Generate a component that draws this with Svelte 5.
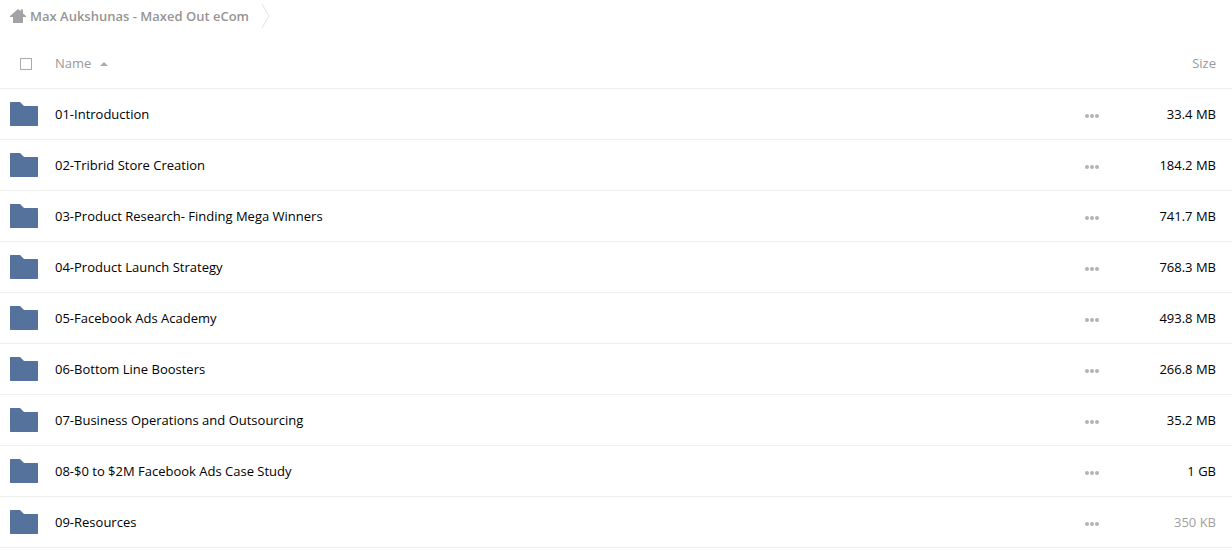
<script lang="ts">
    const columns = { name: 'Name', size: 'Size' };

    let folders = $state([
        { name: '01-Introduction', size: '33.4 MB', small: false, selected: false },
        { name: '02-Tribrid Store Creation', size: '184.2 MB', small: false, selected: false },
        { name: '03-Product Research- Finding Mega Winners', size: '741.7 MB', small: false, selected: false },
        { name: '04-Product Launch Strategy', size: '768.3 MB', small: false, selected: false },
        { name: '05-Facebook Ads Academy', size: '493.8 MB', small: false, selected: false },
        { name: '06-Bottom Line Boosters', size: '266.8 MB', small: false, selected: false },
        { name: '07-Business Operations and Outsourcing', size: '35.2 MB', small: false, selected: false },
        { name: '08-$0 to $2M Facebook Ads Case Study', size: '1 GB', small: false, selected: false },
        { name: '09-Resources', size: '350 KB', small: true, selected: false },
    ]);

    let allSelected = $state(false);
    let ascending = $state(true);

    function toggleAll() {
        folders.forEach((f) => (f.selected = allSelected));
    }

    function toggleSort() {
        ascending = !ascending;
        folders.reverse();
    }
</script>

<nav class="breadcrumb">
    <a href="#home">
        <svg width="16" height="14" viewBox="0 0 16 14" aria-hidden="true">
            <path d="M8 0L0 7v1h3v6h10V8h3V7l-3-2.6V.6h-2.4v1.7z" fill="#a3a3a3" />
        </svg>
        <span>Max Aukshunas - Maxed Out eCom</span>
    </a>
    <svg class="divider" width="9" height="26" viewBox="0 0 9 26" aria-hidden="true">
        <path d="M1 1l7 12-7 12" fill="none" stroke="#e2e2e2" />
    </svg>
</nav>

<table>
    <thead>
        <tr>
            <th class="icon-cell">
                <input type="checkbox" aria-label="Select all" bind:checked={allSelected} onchange={toggleAll} />
            </th>
            <th class="name">
                <button class="sort" onclick={toggleSort}>
                    {columns.name}
                    <svg class:descending={!ascending} width="8" height="4" viewBox="0 0 8 4" aria-hidden="true">
                        <path d="M0 4l4-4 4 4z" fill="#aaa" />
                    </svg>
                </button>
            </th>
            <th class="actions"></th>
            <th class="size">{columns.size}</th>
        </tr>
    </thead>
    <tbody>
        {#each folders as folder (folder.name)}
            <tr class:selected={folder.selected}>
                <td class="icon-cell">
                    <svg width="28" height="24" viewBox="0 0 28 24" aria-hidden="true">
                        <path d="M.5 0H10l4 4h13.5l.5.5v19l-.5.5H.5l-.5-.5V.5z" fill="#54729b" />
                    </svg>
                </td>
                <td class="name"><a href="#{folder.name}">{folder.name}</a></td>
                <td class="actions">
                    <button class="more" aria-label="Actions for {folder.name}">
                        <svg width="14" height="4" viewBox="0 0 14 4" aria-hidden="true">
                            <circle cx="2" cy="2" r="2" />
                            <circle cx="7" cy="2" r="2" />
                            <circle cx="12" cy="2" r="2" />
                        </svg>
                    </button>
                </td>
                <td class="size" class:small={folder.small}>{folder.size}</td>
            </tr>
        {/each}
    </tbody>
</table>

<style>
    :global(body) {
        background: #fff;
        color: #000;
        font-family: 'Open Sans', sans-serif;
        font-size: 13px;
        line-height: 20px;
    }
    svg {
        display: block;
    }
    a {
        color: inherit;
        text-decoration: none;
    }
    button {
        background: none;
        border: none;
        padding: 0;
        font: inherit;
        color: inherit;
        cursor: pointer;
    }
    .breadcrumb {
        display: flex;
        align-items: center;
        gap: 12px;
        height: 32px;
        padding: 0 10px;
        margin-bottom: 6px;
        color: #959595;
        font-weight: 600;
    }
    .breadcrumb a {
        display: flex;
        align-items: center;
        gap: 4px;
    }
    table {
        width: 100%;
        border-collapse: separate;
        border-spacing: 0;
    }
    th,
    td {
        height: 50px;
        padding: 0;
        border-bottom: 1px solid #eee;
        text-align: left;
        font-weight: 400;
    }
    th {
        color: #999;
    }
    .icon-cell {
        width: 45px;
        padding-left: 10px;
    }
    .actions {
        width: 59px;
    }
    .size {
        width: 72px;
        padding-right: 16px;
        text-align: right;
        white-space: nowrap;
    }
    .small {
        color: #a0a0a0;
    }
    input {
        appearance: none;
        display: block;
        box-sizing: border-box;
        width: 12px;
        height: 12px;
        margin: 2px 0 0 10px;
        border: 1px solid #aaa;
    }
    input:checked {
        background: #54729b;
    }
    .sort {
        display: flex;
        align-items: center;
        gap: 9px;
    }
    .sort svg {
        margin-top: 2px;
    }
    .descending {
        transform: rotate(180deg);
    }
    .more {
        display: block;
        padding: 12px 0 8px;
        fill: #b3b3b3;
    }
    .more:hover {
        fill: #666;
    }
    tr.selected {
        background: #f5f8fb;
    }
</style>
